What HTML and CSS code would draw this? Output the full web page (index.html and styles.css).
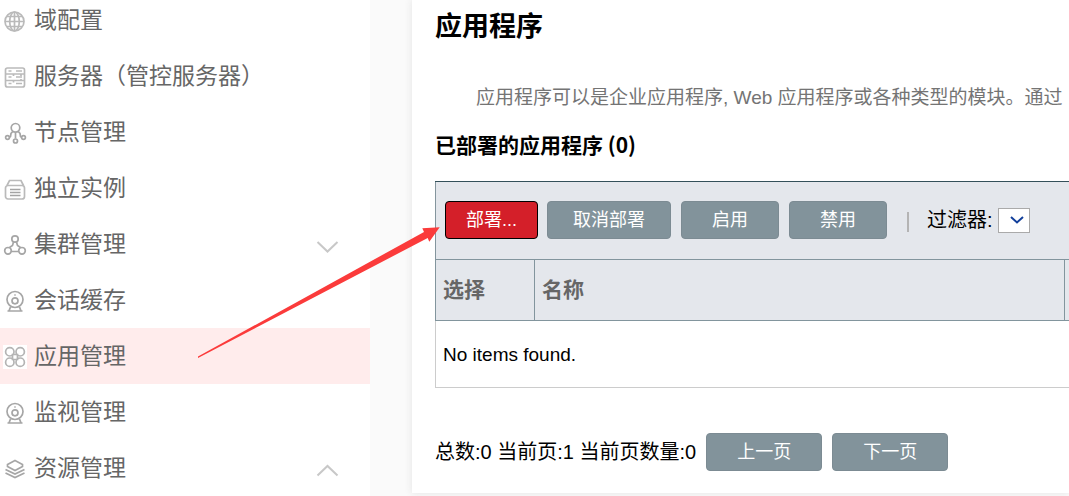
FILE: index.html
```html
<!DOCTYPE html>
<html lang="zh-CN">
<head>
<meta charset="utf-8">
<title>应用程序</title>
<link rel="stylesheet" href="styles.css">
</head>
<body>
<div class="layout">
  <nav class="sidebar">
    <a class="item" href="#"><svg class="icon" viewBox="0 0 24 24"><circle cx="11.500" cy="12.500" r="9.500"/><ellipse cx="11.500" cy="12.500" rx="4.800" ry="9.500"/><path d="M11.500 3v19M2 12.500h19M4 7.500h15M4 17.500h15"/></svg><span>域配置</span></a>
    <a class="item" href="#"><svg class="icon" viewBox="0 0 24 24"><rect x="2.500" y="3" width="19" height="19" rx="2"/><path d="M3 9h18M3 15.500h18M5.500 6h3M13 6h6M5.500 12h3M13 12h6M5.500 18.500h3M13 18.500h6M10.500 9v2M10.500 15.500v2M18 9v2M18 14v2"/></svg><span>服务器（管控服务器）</span></a>
    <a class="item" href="#"><svg class="icon dark" viewBox="0 0 24 24"><circle cx="12.500" cy="6.800" r="4.300"/><circle cx="4.500" cy="16.500" r="1.900"/><circle cx="12.500" cy="20" r="2"/><circle cx="20.500" cy="16.500" r="1.900"/><path d="M12.500 11.500v6M9.800 10.500L8 12.500 7.500 15.500 6 16.500M15.200 10.500L17 12.500 17.500 15.500 19 16.500"/></svg><span>节点管理</span></a>
    <a class="item" href="#"><svg class="icon" viewBox="0 0 24 24"><path d="M4 8.500L6.500 3.500h11.500L20.500 8.500"/><rect x="2.500" y="8.500" width="19" height="13.500" rx="2.500"/><path class="ink" d="M7 12.500h10.500M7 15.500h10.500M7 18.500h10.500"/></svg><span>独立实例</span></a>
    <a class="item" href="#"><svg class="icon dark" viewBox="0 0 24 24"><circle cx="12" cy="6" r="3.200"/><circle cx="5" cy="17.800" r="3.300"/><circle cx="19" cy="17.800" r="3.300"/><path d="M10.500 9L9.500 12.500 6.500 14.500M13.500 9l1 3.500 3 2M8.500 18.500h7"/></svg><span>集群管理</span><svg class="chevron" viewBox="0 0 24 24"><path d="M2.500 10l10 9.500L22.500 10"/></svg></a>
    <a class="item" href="#"><svg class="icon dark" viewBox="0 0 24 24"><circle cx="12" cy="10.500" r="8"/><circle cx="12" cy="11.800" r="3"/><path d="M11.300 6h1.400M7.500 18L6 22h12L16.500 18M4.500 22h15"/></svg><span>会话缓存</span></a>
    <a class="item active" href="#"><svg class="icon boxed" viewBox="0 0 24 24"><circle cx="6.800" cy="6.800" r="4.200"/><circle cx="17.200" cy="6.800" r="4.200"/><circle cx="6.800" cy="17.200" r="4.200"/><circle cx="17.200" cy="17.200" r="4.200"/><path d="M9.500 9.500h5v5h-5z"/></svg><span>应用管理</span></a>
    <a class="item" href="#"><svg class="icon dark" viewBox="0 0 24 24"><circle cx="12" cy="10.500" r="8"/><circle cx="12" cy="11.800" r="3"/><path d="M11.300 6h1.400M7.500 18L6 22h12L16.500 18M4.500 22h15"/></svg><span>监视管理</span></a>
    <a class="item" href="#"><svg class="icon dark" viewBox="0 0 24 24"><path d="M12 3.500l7.500 4v2l-7.500 4-7.500-4v-2zM2.500 12.500L12 17l9.500-4.500M2.500 16L12 20.500l9.500-4.500"/></svg><span>资源管理</span><svg class="chevron" viewBox="0 0 24 24"><path d="M2.500 19.500l10-9.500 10 9.500"/></svg></a>
  </nav>
  <main class="panel">
    <h1>应用程序</h1>
    <p class="intro">应用程序可以是企业应用程序, Web 应用程序或各种类型的模块。通过</p>
    <h2>已部署的应用程序 (0)</h2>
    <section class="grid">
      <div class="toolbar">
        <button class="btn primary" type="button">部署...</button>
        <button class="btn wide" type="button">取消部署</button>
        <button class="btn" type="button">启用</button>
        <button class="btn" type="button">禁用</button>
        <span class="divider"></span>
        <label for="filter">过滤器:</label>
        <span class="picker"><select id="filter"><option></option></select><svg viewBox="0 0 16 16"><path d="M2 5L8 10.500 14 5"/></svg></span>
      </div>
      <table>
        <thead><tr><th class="pick">选择</th><th>名称</th><th class="edge"></th></tr></thead>
        <tbody><tr><td colspan="3">No items found.</td></tr></tbody>
      </table>
    </section>
    <div class="pager">
      <span>总数:0 当前页:1 当前页数量:0</span>
      <button class="btn page" type="button">上一页</button>
      <button class="btn page" type="button">下一页</button>
    </div>
  </main>
  <svg class="pointer" viewBox="0 0 250 136"><path d="M3 132.500L229 8 227.300 4.300 244.700 3.300 234.300 17.700 232.700 14 3 134z"/></svg>
</div>
</body>
</html>
```
FILE: styles.css
```css
* { box-sizing: border-box; }
body {
  margin: 0;
  background: #fafafa;
  color: #000;
  font: 20px/28px "Liberation Sans", "Noto Sans CJK SC", sans-serif;
  overflow: hidden;
}
.layout {
  position: relative;
  display: grid;
  grid-template-columns: 370px minmax(0, 1fr);
  gap: 42px;
  align-items: start;
}
.sidebar { background: #fff; margin-top: -8px; }
.item {
  display: flex;
  align-items: center;
  gap: 7px;
  height: 56px;
  padding: 0 31px 0 3px;
  color: #666;
  font-size: 23px;
  text-decoration: none;
}
.active { background: #ffecec; }
.icon {
  width: 24px;
  height: 24px;
  margin-top: 2px;
  fill: none;
  stroke: #bababa;
  stroke-width: 1.7;
}
.dark { stroke: #a6a6a6; }
.ink { stroke: #a4a4a4; }
.boxed { background: #fff; stroke: #b4b4b4; }
.chevron {
  width: 24px;
  height: 24px;
  margin-left: auto;
  fill: none;
  stroke: #c8c8c8;
  stroke-width: 2;
}
.panel {
  padding: 9px 0 22px 23px;
  background: #fff;
  box-shadow: 0 0 8px #e4e4e4;
  white-space: nowrap;
}
h1 { margin: 0 0 39px; font-size: 27px; line-height: 36px; }
.intro {
  margin: 0 0 18px;
  padding-left: 41px;
  overflow: hidden;
  color: #747474;
  font-size: 19px;
}
h2 {
  margin: 0 0 23px;
  font: bold 21px/28px "Noto Sans CJK SC", sans-serif;
}
.grid { border-top: 1px solid #34505a; }
.toolbar {
  display: flex;
  align-items: center;
  padding: 19px 9px 20px;
  background: #e4e7ec;
  border-left: 1px solid #84959d;
}
.btn {
  height: 38px;
  min-width: 98px;
  margin: 0 10px 0 0;
  padding: 0;
  border: 1px solid #7c8b93;
  border-radius: 4px;
  background: #82939b;
  color: #fff;
  font: 18px/28px "Liberation Sans", "Noto Sans CJK SC", sans-serif;
}
.primary { min-width: 93px; margin-right: 9px; background: #d41f29; border-color: #000; }
.wide { min-width: 124px; }
.page { min-width: 116px; }
.divider { width: 2px; height: 20px; margin: 4px 18px 0 10px; background: #b4b4b4; }
.picker { position: relative; margin-left: 5px; height: 25px; }
.picker select {
  display: block;
  width: 32px;
  height: 25px;
  padding: 0;
  appearance: none;
  background: #fff;
  border: 1px solid #aaa;
  border-radius: 0;
}
.picker svg {
  position: absolute;
  top: 4px;
  right: 5px;
  width: 16px;
  height: 16px;
  fill: none;
  stroke: #123f9b;
  stroke-width: 2;
  pointer-events: none;
}
table { width: 100%; table-layout: fixed; border-collapse: collapse; }
th {
  height: 61px;
  padding: 0 7px;
  background: #e4e7ec;
  border: 1px solid #82959d;
  border-right: 0;
  color: #666;
  font-size: 21px;
  text-align: left;
}
.pick { width: 99px; }
.edge { width: 5px; padding: 0; }
td {
  height: 67px;
  padding: 2px 7px 0;
  border: 1px solid #ccc;
  border-right: 0;
  font-size: 19px;
}
.pager { display: flex; align-items: center; margin-top: 45px; }
.pager span { margin-right: 10px; }
.pointer {
  position: absolute;
  top: 224px;
  left: 195px;
  width: 250px;
  height: 136px;
  fill: #fb3b3b;
  pointer-events: none;
}
```
